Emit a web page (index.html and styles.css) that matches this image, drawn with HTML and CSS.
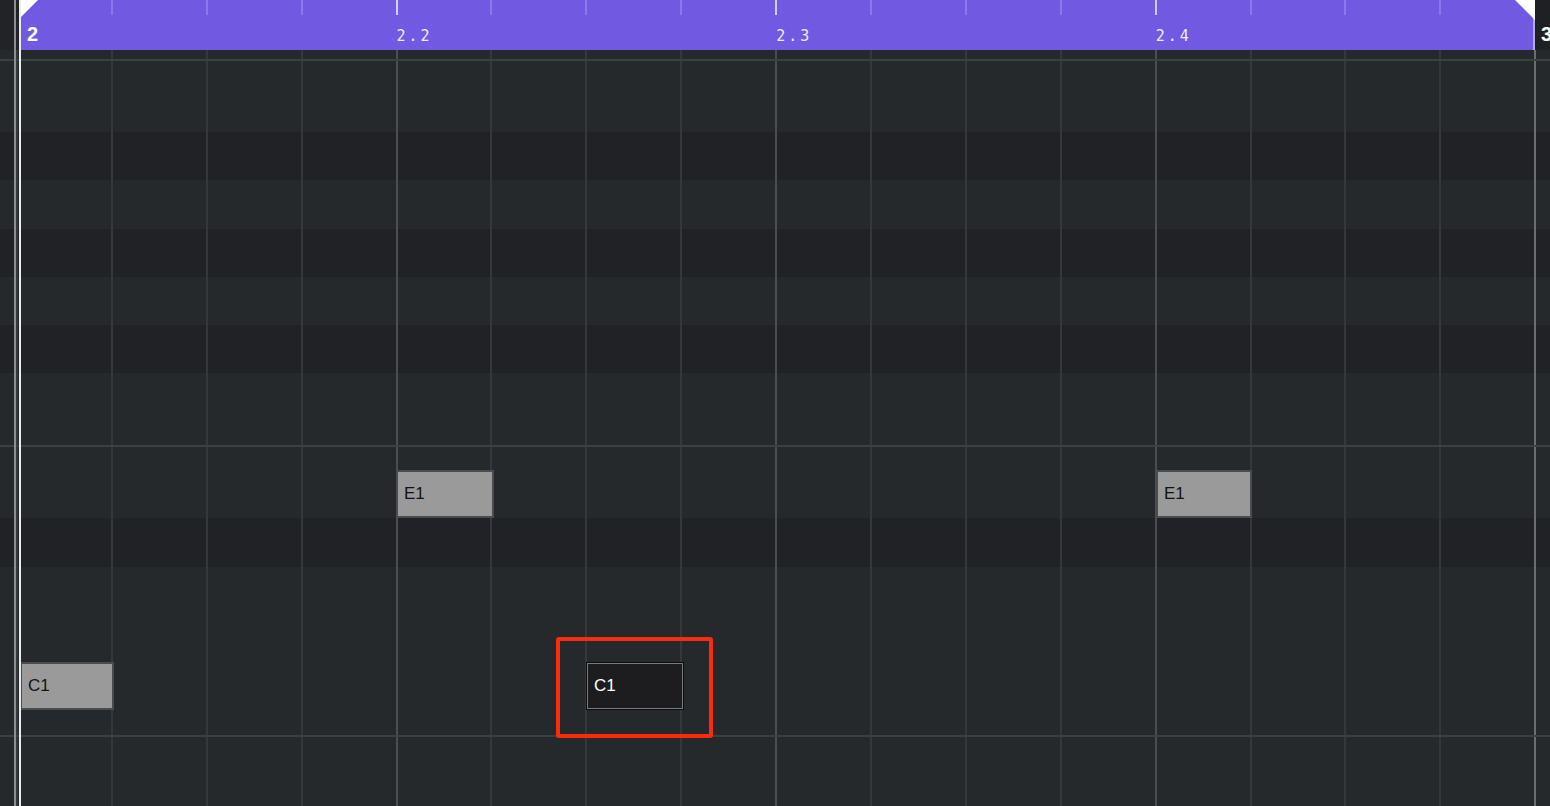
FILE: index.html
```html
<!DOCTYPE html>
<html lang="en">
<head>
<meta charset="utf-8">
<title>Piano Roll</title>
<link rel="stylesheet" href="styles.css">
</head>
<body>
<div class="editor">
  <header class="ruler">
    <div class="ruler-gutter"></div>
    <div class="ruler-bar">
      <div class="step first"><span class="bar-num">2</span></div>
      <div class="step"></div>
      <div class="step"></div>
      <div class="step"></div>
      <div class="step beat"><span class="beat-num">2.2</span></div>
      <div class="step"></div>
      <div class="step"></div>
      <div class="step"></div>
      <div class="step beat"><span class="beat-num">2.3</span></div>
      <div class="step"></div>
      <div class="step"></div>
      <div class="step"></div>
      <div class="step beat"><span class="beat-num">2.4</span></div>
      <div class="step"></div>
      <div class="step"></div>
      <div class="step"></div>
    </div>
    <div class="ruler-next"><span class="bar-num">3</span></div>
  </header>

  <main class="roll">
    <!-- pitch lanes, top to bottom -->
    <div class="lanes">
      <div class="lane top"></div>
      <div class="lane"></div>
      <div class="lane dim"></div>
      <div class="lane"></div>
      <div class="lane dim"></div>
      <div class="lane"></div>
      <div class="lane dim"></div>
      <div class="lane"></div>
      <div class="lane"></div>
      <div class="lane"></div>
      <div class="lane dim"></div>
      <div class="lane"></div>
      <div class="lane"></div>
      <div class="lane"></div>
      <div class="lane"></div>
      <div class="lane"></div>
    </div>

    <!-- sixteenth-note grid -->
    <div class="cols">
      <div class="col"></div>
      <div class="col"></div>
      <div class="col"></div>
      <div class="col"></div>
      <div class="col beat"></div>
      <div class="col"></div>
      <div class="col"></div>
      <div class="col"></div>
      <div class="col beat"></div>
      <div class="col"></div>
      <div class="col"></div>
      <div class="col"></div>
      <div class="col beat"></div>
      <div class="col"></div>
      <div class="col"></div>
      <div class="col"></div>
      <div class="col bar"></div>
    </div>

    <div class="octave-line" style="top: 9px"></div>
    <div class="octave-line" style="top: 395px"></div>
    <div class="octave-line" style="top: 685px"></div>

    <div class="note" style="left: 396px; top: 420px; width: 98px">E1</div>
    <div class="note" style="left: 1156px; top: 420px; width: 96px">E1</div>
    <div class="note" style="left: 20px; top: 612px; width: 94px">C1</div>
    <div class="note selected" style="left: 586px; top: 612px; width: 98px">C1</div>

    <div class="focus-ring" style="left: 556px; top: 587px"></div>
  </main>

  <div class="playhead"></div>
</div>
</body>
</html>
```

FILE: styles.css
```css
* {
  box-sizing: border-box;
}

html,
body {
  margin: 0;
  padding: 0;
  background: #25282b;
  overflow: hidden;
}

.editor {
  position: relative;
  width: 1550px;
  height: 806px;
  display: flex;
  flex-direction: column;
  font-family: "Liberation Sans", Arial, sans-serif;
}

/* ---------- timeline ruler ---------- */
.ruler {
  height: 50px;
  flex: none;
  display: flex;
}

.ruler-gutter {
  width: 21px;
  background: #222326;
}

.ruler-bar {
  position: relative;
  width: 1514px;
  background: #7159e1;
  display: grid;
  grid-template-columns: 90.9px repeat(15, 94.9px);
  border-right: 2px solid #b3a8ee;
}

/* clipped corners at both ends of the bar */
.ruler-bar::before,
.ruler-bar::after {
  content: "";
  position: absolute;
  top: 0;
  background: #ffffff;
}

.ruler-bar::before {
  left: 0;
  width: 17px;
  height: 17px;
  clip-path: polygon(0 0, 100% 0, 0 100%);
}

.ruler-bar::after {
  right: -2px;
  width: 20px;
  height: 20px;
  clip-path: polygon(0 0, 100% 0, 100% 100%);
}

.step {
  position: relative;
}

.step:not(.first)::before {
  content: "";
  position: absolute;
  left: -1px;
  top: 0;
  width: 2px;
  height: 15px;
  background: #8b78ea;
}

.step.beat::before {
  background: #d3cbf9;
}

.bar-num {
  position: absolute;
  left: 6px;
  top: 22px;
  font-size: 20px;
  font-weight: 700;
  color: #ffffff;
  line-height: 24px;
}

.beat-num {
  position: absolute;
  left: 0;
  top: 26px;
  font-family: "DejaVu Sans Mono", monospace;
  font-size: 15px;
  line-height: 20px;
  letter-spacing: 3px;
  color: #efecfd;
}

.ruler-next {
  position: relative;
  flex: 1;
  background: #1f2023;
}

.ruler-next .bar-num {
  left: 6px;
}

/* ---------- note grid ---------- */
.roll {
  position: relative;
  flex: 1;
  overflow: hidden;
}

.lanes {
  display: flex;
  flex-direction: column;
}

.lane {
  height: 48.3px;
  flex: none;
  background: #26292c;
}

.lane.top {
  height: 33.7px;
}

.lane.dim {
  background: #212225;
}

.cols {
  position: absolute;
  top: 0;
  bottom: 0;
  left: 17px;
  display: grid;
  grid-template-columns: repeat(16, 94.9px) 20px;
}

.col {
  position: relative;
}

.col::before {
  content: "";
  position: absolute;
  left: -1px;
  top: 0;
  bottom: 0;
  width: 2px;
  background: #35383b;
}

.col.beat::before {
  background: #4b4e51;
}

.col.bar::before {
  background: #6d6d6d;
}

.octave-line {
  position: absolute;
  left: 0;
  right: 0;
  height: 2px;
  background: #3d4043;
}

/* ---------- notes ---------- */
.note {
  position: absolute;
  height: 48px;
  padding-left: 6px;
  display: flex;
  align-items: center;
  background: #9a9a9a;
  border: 2px solid #4b4c4f;
  color: #121212;
  font-size: 17px;
}

.note.selected {
  background: #1d1d1f;
  border: 1px solid #0b0b0b;
  box-shadow: inset 0 0 0 1px #7c7c7c;
  color: #ffffff;
  padding-left: 7px;
}

.focus-ring {
  position: absolute;
  width: 157px;
  height: 101px;
  border: 4px solid #fb2c0b;
  border-radius: 3px;
}

/* ---------- playhead ---------- */
.playhead {
  position: absolute;
  left: 14px;
  top: 0;
  width: 7px;
  height: 806px;
  border-left: 2px solid #8e8e8e;
  border-right: 2px solid #ececec;
}
```
